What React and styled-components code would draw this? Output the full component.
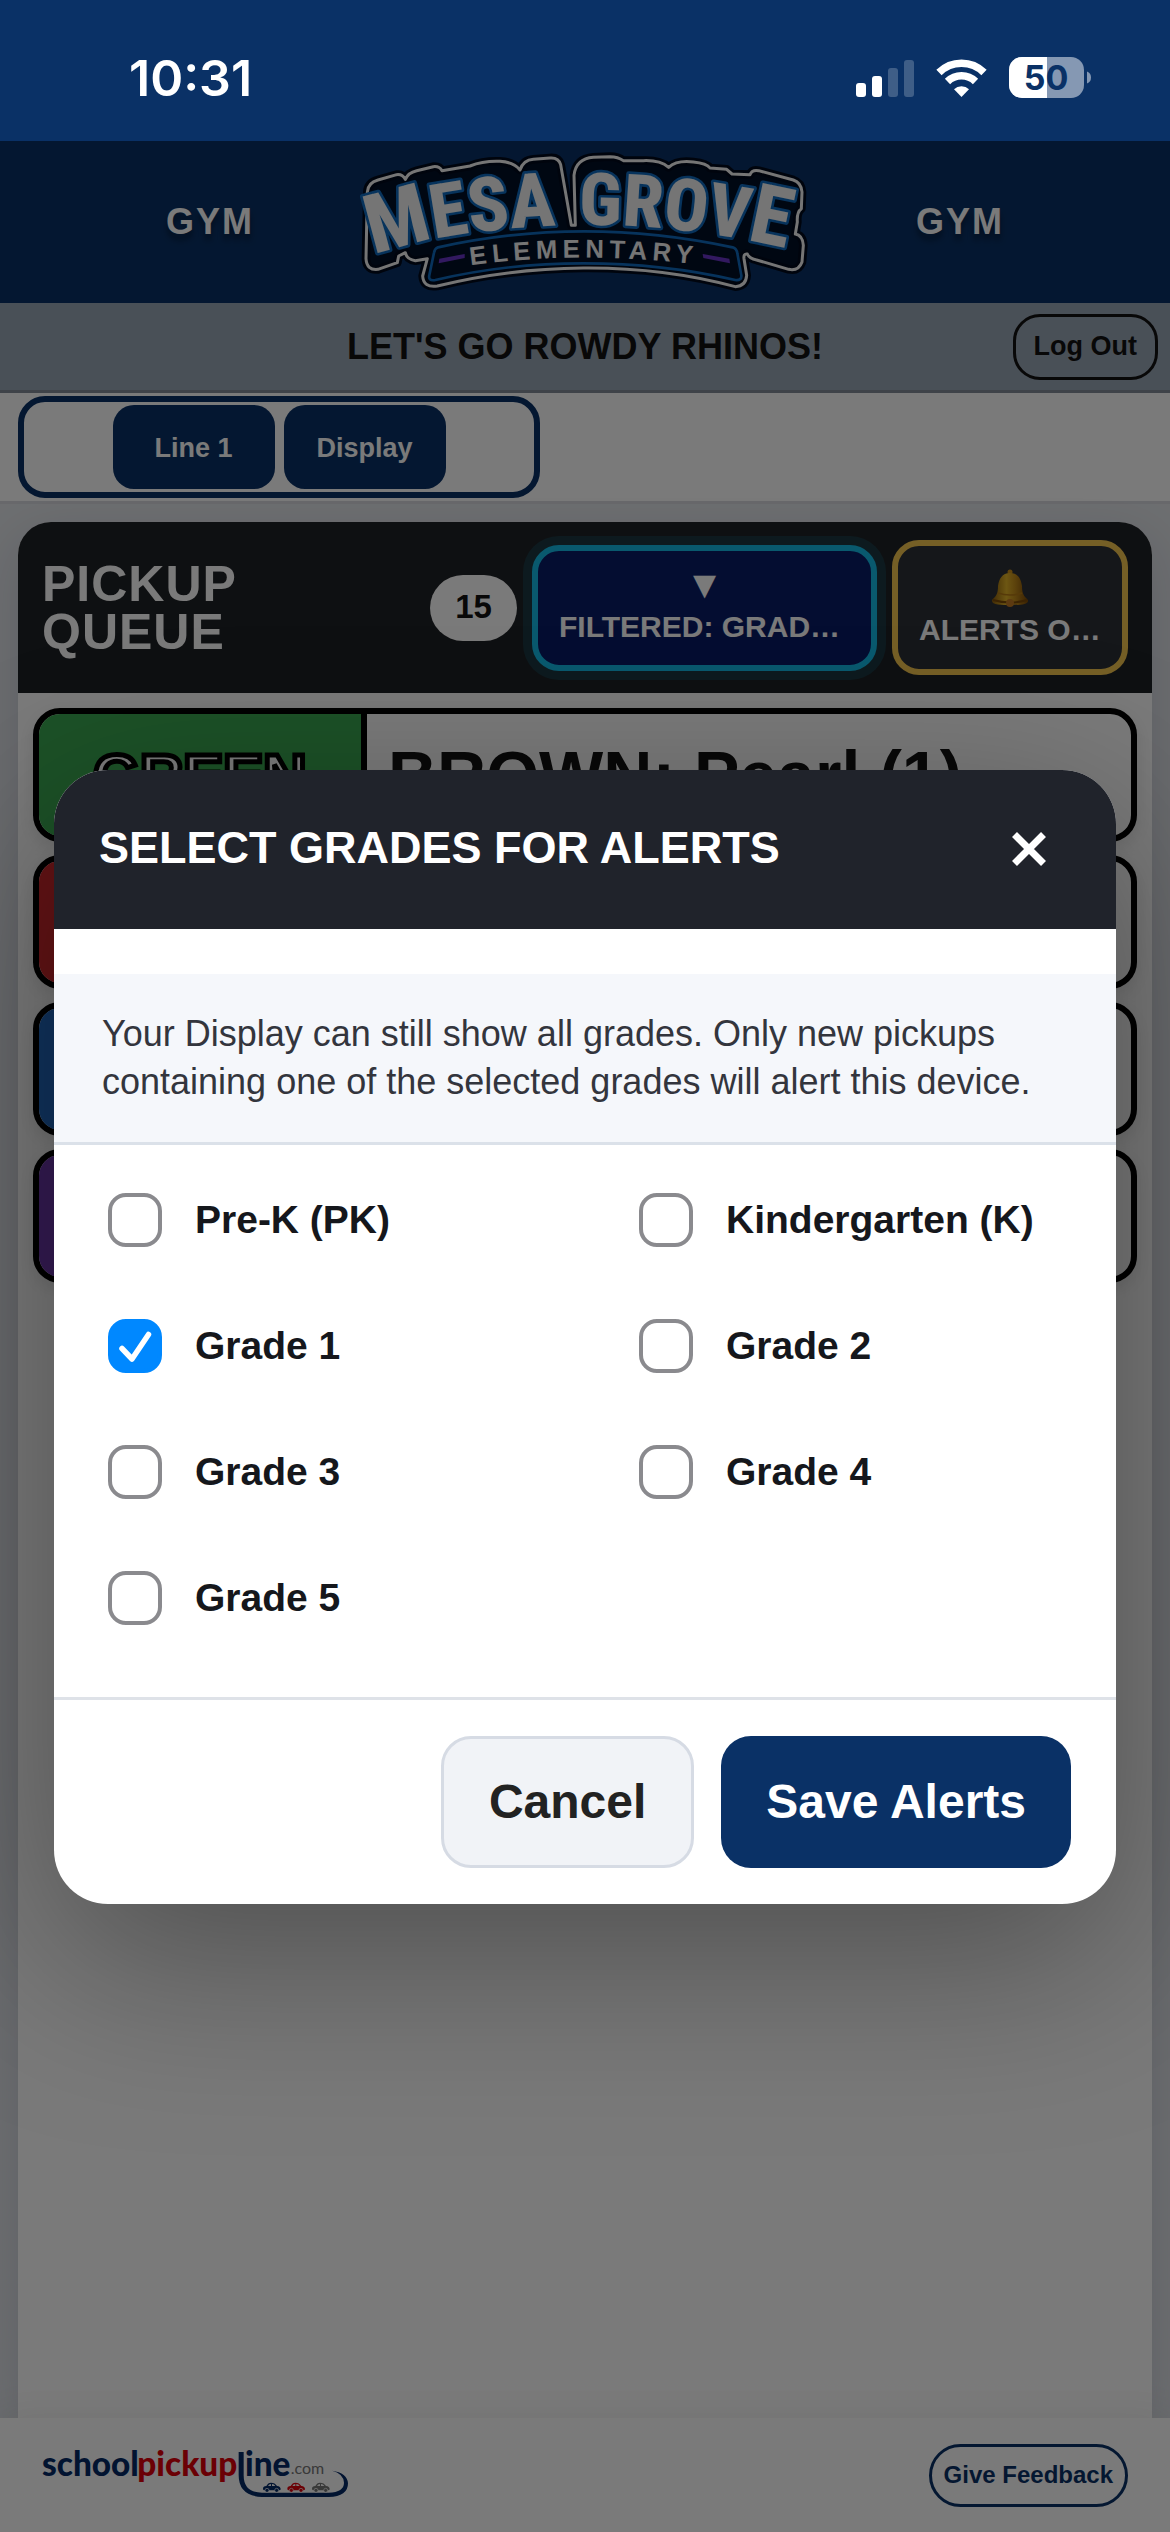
import React, { useState } from "react";
import styled, { createGlobalStyle } from "styled-components";

const GlobalStyle = createGlobalStyle`
  * { box-sizing: border-box; }
  body {
    margin: 0;
    background: #e3e6eb;
    color: #111;
    font-family: Arial, "Liberation Sans", sans-serif;
  }
  button, input { font-family: inherit; margin: 0; }
  h1, h2, p, ul { margin: 0; padding: 0; }
`;

const Page = styled.div`
  min-height: 100vh;
  display: flex;
  flex-direction: column;
`;

const StatusBar = styled.div`
  height: 141px;
  padding: 15px 78px 0 129px;
  display: flex;
  align-items: center;
  justify-content: space-between;
  background: #0a3166;
  color: #fff;
`;

const Clock = styled.time`
  font: 600 50px/60px Inter, sans-serif;
`;

const StatusIcons = styled.div`
  display: flex;
  align-items: center;
  gap: 22px;
`;

const AppArea = styled.div`
  position: relative;
  flex: 1;
  display: flex;
  flex-direction: column;
`;

const SchoolHeader = styled.header`
  height: 162px;
  padding: 0 70px;
  display: grid;
  grid-template-columns: 1fr auto 1fr;
  align-items: center;
  justify-items: center;
  background: #0a3166;
`;

const Place = styled.span`
  color: #fff;
  font-size: 36px;
  font-weight: 700;
  letter-spacing: 2px;
  text-shadow: 0 6px 6px rgba(0, 0, 0, 0.4);
`;

const Announcement = styled.div`
  min-height: 90px;
  padding: 8px 12px;
  display: grid;
  grid-template-columns: 1fr auto 1fr;
  align-items: center;
  background: #9aa7b7;
  border-bottom: 3px solid #848c98;
`;

const Slogan = styled.p`
  grid-column: 2;
  font-size: 36px;
  font-weight: 700;
`;

const LogOut = styled.button`
  justify-self: end;
  height: 66px;
  padding: 0 18px;
  border: 3px solid #111;
  border-radius: 27px;
  background: transparent;
  color: #111;
  font-size: 27px;
  font-weight: 700;
`;

const Toolbar = styled.div`
  padding: 3px 18px;
  display: flex;
  background: #fff;
  border-bottom: 3px solid #d9dae0;
`;

const Tabs = styled.nav`
  flex: 0 1 522px;
  padding: 3px;
  display: flex;
  justify-content: center;
  gap: 9px;
  border: 6px solid #0a3166;
  border-radius: 27px;
`;

const Tab = styled.button`
  width: 162px;
  height: 84px;
  padding: 3px 6px 0;
  border: 0;
  border-radius: 21px;
  background: #0a3166;
  color: #fff;
  font-size: 27px;
  font-weight: 700;
`;

const Panel = styled.main`
  flex: 1;
  margin: 18px 18px 0;
  border-radius: 33px 33px 0 0;
  background: #fff;
  box-shadow: 0 18px 54px rgba(20, 30, 50, 0.14);
`;

const PanelHeader = styled.div`
  min-height: 171px;
  padding: 18px 24px;
  display: flex;
  align-items: center;
  gap: 15px;
  border-radius: 33px 33px 0 0;
  background: #1f2226;
  color: #fff;
`;

const PanelTitle = styled.h1`
  flex: 1;
  font-size: 50px;
  line-height: 48px;
  font-weight: 700;
  letter-spacing: 1px;
`;

const Count = styled.span`
  width: 87px;
  height: 66px;
  border-radius: 33px;
  background: #fff;
  color: #111;
  font-size: 33px;
  line-height: 63px;
  font-weight: 700;
  text-align: center;
`;

const PanelButton = styled.button`
  width: ${(p) => p.$width};
  height: ${(p) => p.$height};
  padding: 0 21px;
  display: flex;
  flex-direction: column;
  align-items: center;
  justify-content: center;
  gap: 3px;
  border: 6px solid ${(p) => p.$edge};
  border-radius: 27px;
  background: ${(p) => p.$fill};
  box-shadow: ${(p) => p.$ring || "none"};
  color: #fff;
  font-size: 30px;
  line-height: 36px;
  font-weight: 700;
`;

const Arrow = styled.span`
  padding-bottom: 6px;
  font-size: 39px;
  line-height: 30px;
`;

const Clip = styled.span`
  max-width: 100%;
  overflow: hidden;
  text-overflow: ellipsis;
  white-space: nowrap;
`;

const Queue = styled.ul`
  padding: 15px;
  display: grid;
  gap: 13px;
  list-style: none;
`;

const QueueRow = styled.li`
  height: 134px;
  display: grid;
  grid-template-columns: 328px 1fr;
  border: 6px solid #000;
  border-radius: 27px;
  overflow: hidden;
  background: #fff;
  box-shadow: 0 6px 18px rgba(0, 0, 0, 0.1);
`;

const Lane = styled.div`
  display: flex;
  align-items: center;
  justify-content: center;
  border-right: 6px solid #000;
  background: ${(p) => p.$color};
  color: #fff;
  font-size: 60px;
  font-weight: 700;
  -webkit-text-stroke: 5px #000;
`;

const Student = styled.div`
  padding: 0 21px;
  display: flex;
  align-items: center;
  color: #111;
  font-size: 68px;
  font-weight: 700;
`;

const BottomBar = styled.footer`
  min-height: 114px;
  padding: 0 42px;
  display: flex;
  align-items: center;
  justify-content: space-between;
  background: #fff;
  box-shadow: 0 -6px 36px rgba(0, 0, 0, 0.06);
`;

const Feedback = styled.button`
  height: 63px;
  padding: 0 12px;
  border: 3px solid #0a3166;
  border-radius: 32px;
  background: #fff;
  color: #0a3166;
  font-size: 24px;
  font-weight: 700;
`;

const Overlay = styled.div`
  position: absolute;
  inset: 0;
  padding: 54px;
  display: flex;
  align-items: center;
  justify-content: center;
  background: rgba(0, 0, 0, 0.52);
`;

const Dialog = styled.form`
  width: 100%;
  border-radius: 54px;
  overflow: hidden;
  background: #fff;
  box-shadow: 0 54px 180px rgba(0, 0, 0, 0.35);
`;

const DialogHeader = styled.div`
  height: 159px;
  padding: 0 45px;
  display: flex;
  align-items: center;
  justify-content: space-between;
  background: #20232b;
  color: #fff;
`;

const DialogTitle = styled.h2`
  && { padding-bottom: 3px; }
  font-size: 45px;
  line-height: 54px;
  font-weight: 700;
`;

const Close = styled.button`
  width: 84px;
  height: 84px;
  padding: 0;
  display: grid;
  place-items: center;
  border: 0;
  background: transparent;
`;

const Description = styled.p`
  && { margin-top: 45px; padding: 36px 48px; }
  border-bottom: 3px solid #dbe1e9;
  background: #f5f7fb;
  color: #33353d;
  font-size: 36px;
  line-height: 48px;
`;

const Grades = styled.div`
  padding: 21px 0 45px;
  display: grid;
  grid-template-columns: 1fr 1fr;
  row-gap: 18px;
`;

const Grade = styled.label`
  height: 108px;
  padding-left: 54px;
  display: flex;
  align-items: center;
  gap: 33px;
  color: #15171c;
  font-size: 39px;
  line-height: 48px;
  font-weight: 700;
`;

const Tick = styled.input`
  appearance: none;
  width: 54px;
  height: 54px;
  border: 4px solid #8a8a8e;
  border-radius: 18px;
  background: #fff;
  &:checked {
    border-color: #0088ff;
    background: #0088ff;
  }
`;

const TickBox = styled.span`
  display: grid;
  & > * { grid-area: 1 / 1; }
  svg { pointer-events: none; }
`;

const Actions = styled.div`
  padding: 36px 45px;
  display: flex;
  justify-content: flex-end;
  gap: 27px;
  border-top: 3px solid #dee2e8;
`;

const Action = styled.button`
  height: 132px;
  padding: 0 45px;
  border: ${(p) => (p.$primary ? "0" : "3px solid #d6dbe4")};
  border-radius: 30px;
  background: ${(p) => (p.$primary ? "#0a3166" : "#f1f3f7")};
  color: ${(p) => (p.$primary ? "#fff" : "#222")};
  font-size: 48px;
  font-weight: 700;
`;

const Signal = () => (
  <svg width="58" height="38" viewBox="0 0 58 38" fill="#fff" aria-hidden="true">
    <rect x="0" y="24" width="10" height="14" rx="3" />
    <rect x="16" y="17" width="10" height="21" rx="3" />
    <rect x="32" y="9" width="10" height="29" rx="3" opacity=".22" />
    <rect x="48" y="1" width="10" height="37" rx="3" opacity=".22" />
  </svg>
);

const Wifi = () => (
  <svg width="51" height="38" viewBox="0 0 51 38" aria-hidden="true">
    <g fill="none" stroke="#fff" strokeWidth="7.5">
      <path d="M3 13.500A32 32 0 0 1 48 13.500" />
      <path d="M11.500 22.500A20 20 0 0 1 39.500 22.500" />
    </g>
    <path d="M18 30.200A11 11 0 0 1 33 30.200L25.500 38Z" fill="#fff" />
  </svg>
);

const Battery = () => (
  <svg width="83" height="42" viewBox="0 0 83 42" role="img" aria-label="Battery 50%">
    <defs>
      <clipPath id="level"><rect width="38" height="42" /></clipPath>
    </defs>
    <rect width="75" height="41" rx="13" fill="#8598b3" />
    <rect width="75" height="41" rx="13" fill="#fff" clipPath="url(#level)" />
    <path d="M78 14.500Q82 16 82 20.500T78 26.500Z" fill="#8598b3" />
    <text x="37" y="33" textAnchor="middle" fontFamily="Inter, sans-serif" fontWeight="700" fontSize="34" fill="#0a3166">50</text>
  </svg>
);

const plate =
  "M52 150Q54 122 84 114L140 98Q158 96 166 112Q174 92 200 86L250 74Q268 72 276 86L360 72Q400 56 450 58Q490 60 510 84Q520 54 550 52L600 48Q626 46 632 68L664 250L676 250L672 100Q678 50 730 46L780 44Q804 44 820 56L880 56Q930 54 956 76Q980 54 1030 60Q1070 64 1080 78L1130 82L1146 96L1200 98Q1206 82 1226 86L1330 114Q1354 122 1356 150L1354 200Q1340 210 1342 240L1336 276Q1358 280 1360 310L1356 360Q1346 388 1316 382L1220 354Q1198 350 1192 336Q1180 334 1182 350L1190 400Q1188 432 1156 434Q940 376 700 378Q470 380 262 432Q220 438 218 402L232 350L196 356Q170 352 166 332L146 342L142 362L84 382Q50 386 48 350Z";

const SchoolLogo = () => (
  <svg width="470" height="160" viewBox="0 0 1410 480" role="img" aria-label="Mesa Grove Elementary">
    <path d={plate} fill="#020f27" stroke="#010a1c" strokeWidth="26" strokeLinejoin="round" />
    <path d={plate} fill="none" stroke="#f4f4f4" strokeWidth="9" strokeLinejoin="round" />
    <path
      d="M264 316Q700 220 1148 316Q1160 320 1162 334L1174 400Q1176 416 1156 414Q940 364 700 364Q470 364 256 414Q234 418 238 400L252 332Q254 320 264 316Z"
      fill="#020f27"
      stroke="#0f6cc0"
      strokeWidth="8"
    />
    <path d="M268 350L344 336V348L266 364Z" fill="#6a35c8" />
    <path d="M1058 336L1138 350L1140 364L1060 348Z" fill="#6a35c8" />
    <path id="mesaArc" d="M72 340Q300 256 720 248" fill="none" />
    <path id="groveArc" d="M686 248Q1060 246 1440 352" fill="none" />
    <path id="elementaryArc" d="M362 370Q700 322 1100 374" fill="none" />
    <g
      fontFamily="'Roboto Condensed', 'Open Sans Condensed', Roboto, sans-serif"
      fontWeight="800"
      fill="#f4f4f4"
      stroke="#0f6cc0"
      strokeWidth="16"
      strokeLinejoin="round"
      paintOrder="stroke"
    >
      <text fontSize="226">
        <textPath href="#mesaArc"><tspan fontSize="246">M</tspan><tspan fontSize="226">ESA</tspan></textPath>
      </text>
      <text fontSize="218">
        <textPath href="#groveArc"><tspan>GROV</tspan><tspan fontSize="248">E</tspan></textPath>
      </text>
    </g>
    <text
      fontFamily="'Liberation Sans', Arial, sans-serif"
      fontWeight="700"
      fontSize="77"
      letterSpacing="16"
      fill="#f4f4f4"
    >
      <textPath href="#elementaryArc">ELEMENTARY</textPath>
    </text>
  </svg>
);

const Bell = () => (
  <svg width="38" height="42" viewBox="0 -2 38 42" aria-hidden="true">
    <defs>
      <linearGradient id="brass" x1="0" x2="1">
        <stop offset="0" stopColor="#8a5c0c" />
        <stop offset=".4" stopColor="#e3b428" />
        <stop offset=".65" stopColor="#c08a1a" />
        <stop offset="1" stopColor="#7a4806" />
      </linearGradient>
    </defs>
    <circle cx="19" cy="3" r="2.500" fill="#c98f1a" />
    <path d="M19 4C27 4 30 10 31 17C31 25 33 27 37 31C38 36 28 36 19 36S0 36 1 31C5 27 7 25 7 17C8 10 11 4 19 4Z" fill="url(#brass)" />
    <path d="M2 31Q19 36 36 31" fill="none" stroke="#7b4a08" strokeWidth="2" />
    <path d="M7 24Q19 28 31 24" fill="none" stroke="#b57a14" strokeWidth="1.500" />
    <circle cx="19" cy="34" r="4" fill="#c07a24" />
  </svg>
);

const Car = ({ x, color }) => (
  <g transform={`translate(${x} 92)`} fill={color}>
    <path d="M0 18Q0 11 10 10Q15 0 24 0Q36 0 42 10Q53 11 53 20Q53 23 48 23H4Q0 23 0 18Z" />
    <path d="M15 10Q18 4 24 4V10ZM27 4Q34 4 37 10H27Z" fill="#fff" />
    <circle cx="12" cy="23" r="6" stroke="#fff" strokeWidth="2" />
    <circle cx="41" cy="23" r="6" stroke="#fff" strokeWidth="2" />
  </g>
);

const CompanyLogo = () => (
  <svg width="307" height="46" viewBox="0 0 921 138" overflow="visible" role="img" aria-label="schoolpickupline.com">
    <g fontFamily="Lato, sans-serif" fontWeight="900" fontSize="100">
      <text x="0" y="72" fill="#052a66">school</text>
      <text x="286" y="72" fill="#e0000b">pickup</text>
      <text x="609" y="72" fill="#052a66">ine</text>
    </g>
    <text x="746" y="66" fontFamily="Lato, sans-serif" fontSize="48" fill="#777">.com</text>
    <path d="M590 0H605V70Q605 122 660 122H860Q906 120 906 92Q904 64 870 56Q916 62 918 94Q918 134 860 135H660Q590 132 590 70Z" fill="#052a66" />
    <Car x={663} color="#052a66" />
    <Car x={736} color="#e0000b" />
    <Car x={810} color="#777" />
  </svg>
);

const lanes = [
  { name: "GREEN", color: "#3caa52", student: "BROWN: Pearl (1)" },
  { name: "", color: "#d0292d", student: "" },
  { name: "", color: "#226cc4", student: "" },
  { name: "", color: "#6f39ae", student: "" },
];

const grades = ["Pre-K (PK)", "Kindergarten (K)", "Grade 1", "Grade 2", "Grade 3", "Grade 4", "Grade 5"];

export default function App() {
  const [selected, setSelected] = useState(["Grade 1"]);
  const toggle = (name) =>
    setSelected((now) => (now.includes(name) ? now.filter((n) => n !== name) : [...now, name]));

  return (
    <Page>
      <GlobalStyle />
      <StatusBar>
        <Clock>10:31</Clock>
        <StatusIcons>
          <Signal />
          <Wifi />
          <Battery />
        </StatusIcons>
      </StatusBar>
      <AppArea>
        <SchoolHeader>
          <Place>GYM</Place>
          <SchoolLogo />
          <Place>GYM</Place>
        </SchoolHeader>
        <Announcement>
          <Slogan>LET'S GO ROWDY RHINOS!</Slogan>
          <LogOut type="button">Log Out</LogOut>
        </Announcement>
        <Toolbar>
          <Tabs>
            <Tab type="button">Line 1</Tab>
            <Tab type="button">Display</Tab>
          </Tabs>
        </Toolbar>
        <Panel>
          <PanelHeader>
            <PanelTitle>PICKUP<br />QUEUE</PanelTitle>
            <Count>15</Count>
            <PanelButton
              type="button"
              $width="345px"
              $height="126px"
              $edge="#14bbe6"
              $fill="#0a1d68"
              $ring="0 0 0 9px rgba(20, 187, 230, 0.15)"
            >
              <Arrow>▼</Arrow>
              <Clip>FILTERED: GRADE 1</Clip>
            </PanelButton>
            <PanelButton type="button" $width="236px" $height="135px" $edge="#f5c650" $fill="#2c3038">
              <Bell />
              <Clip>ALERTS ON: GRADE 1</Clip>
            </PanelButton>
          </PanelHeader>
          <Queue>
            {lanes.map((lane) => (
              <QueueRow key={lane.color}>
                <Lane $color={lane.color}>{lane.name}</Lane>
                <Student>{lane.student}</Student>
              </QueueRow>
            ))}
          </Queue>
        </Panel>
        <BottomBar>
          <CompanyLogo />
          <Feedback type="button">Give Feedback</Feedback>
        </BottomBar>
        <Overlay>
          <Dialog role="dialog" aria-labelledby="dialog-title" onSubmit={(e) => e.preventDefault()}>
            <DialogHeader>
              <DialogTitle id="dialog-title">SELECT GRADES FOR ALERTS</DialogTitle>
              <Close type="button" aria-label="Close">
                <svg width="36" height="36" viewBox="0 0 36 36" stroke="#fff" strokeWidth="7">
                  <path d="M3.500 3.500L32.500 32.500M32.500 3.500L3.500 32.500" />
                </svg>
              </Close>
            </DialogHeader>
            <Description>
              Your Display can still show all grades. Only new pickups containing one of the selected grades will alert this device.
            </Description>
            <Grades>
              {grades.map((name) => (
                <Grade key={name}>
                  <TickBox>
                    <Tick type="checkbox" checked={selected.includes(name)} onChange={() => toggle(name)} />
                    {selected.includes(name) && (
                      <svg width="54" height="54" viewBox="0 0 54 54" fill="none" stroke="#fff" strokeWidth="5.500" strokeLinecap="round" strokeLinejoin="round">
                        <path d="M14 29.500L24 40L40.500 15.500" />
                      </svg>
                    )}
                  </TickBox>
                  {name}
                </Grade>
              ))}
            </Grades>
            <Actions>
              <Action type="button">Cancel</Action>
              <Action type="submit" $primary>Save Alerts</Action>
            </Actions>
          </Dialog>
        </Overlay>
      </AppArea>
    </Page>
  );
}
